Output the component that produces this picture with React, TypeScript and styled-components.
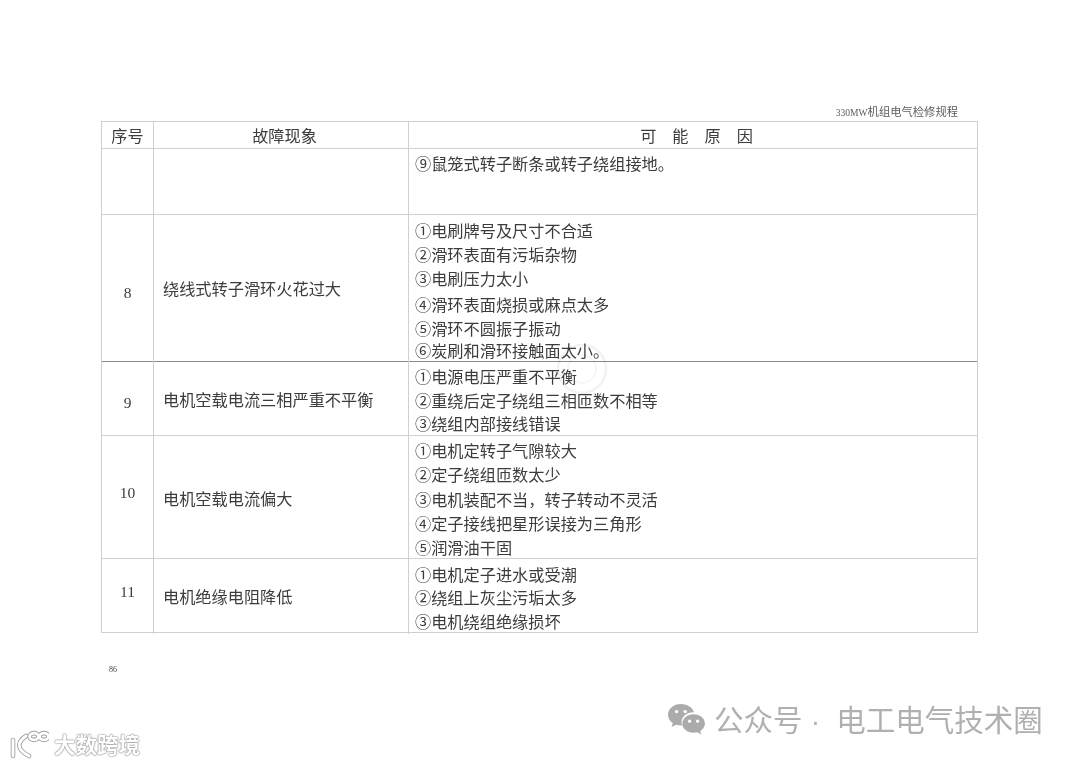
import React from 'react';
import styled, { createGlobalStyle } from 'styled-components';

const Global = createGlobalStyle`
  html, body { margin: 0; padding: 0; background: #fff; }
  body { width: 1080px; height: 764px; overflow: hidden; }
`;

const SERIF = `"Liberation Serif", "Noto Sans CJK SC", serif`;

const Page = styled.div`
  position: relative;
  width: 1080px;
  height: 764px;
  background: #fff;
  overflow: hidden;
  padding: 104px 0 0 101px;
  box-sizing: border-box;
  font-family: ${SERIF};
  color: #3c3c3c;
  filter: blur(0.35px);
`;

const RunningHead = styled.div`
  width: 857px;
  height: 17px;
  line-height: 17px;
  font-size: 11.3px;
  text-align: right;
  color: #5c5c5c;
`;

const Latin = styled.span`
  font-size: 9.6px;
`;

const Table = styled.div`
  width: 877px;
  border: 1px solid #cfcfcf;
  box-sizing: border-box;
`;

const Row = styled.div<{ $h: number; $line?: string }>`
  display: grid;
  grid-template-columns: 51px 255px 1fr;
  height: ${p => p.$h}px;
  box-sizing: border-box;
  border-bottom: 1px solid ${p => p.$line ?? '#d2d2d2'};
  &:last-child { border-bottom: none; }
`;

const Cell = styled.div`
  border-left: 1px solid #d0d0d0;
  display: flex;
  box-sizing: border-box;
  &:first-child { border-left: none; }
`;

const HeadCell = styled(Cell)<{ $spacing?: number; $shift?: number }>`
  align-items: center;
  justify-content: center;
  padding: 3px 0 0 ${p => p.$shift ?? 0}px;
  font-size: 16.2px;
  line-height: 24px;
  letter-spacing: ${p => p.$spacing ?? 0}px;
`;

const NumCell = styled(Cell)<{ $top: number }>`
  align-items: flex-start;
  justify-content: center;
  padding-top: ${p => p.$top}px;
  font-size: 15.5px;
  line-height: 20px;
`;

const FaultCell = styled(Cell)<{ $top: number }>`
  align-items: flex-start;
  padding: ${p => p.$top}px 0 0 9px;
  font-size: 16.2px;
  line-height: 22px;
`;

const CauseCell = styled(Cell)`
  flex-direction: column;
  padding-left: 6px;
  font-size: 16.2px;
`;

const Cause = styled.div<{ $top: number }>`
  height: 22px;
  line-height: 22px;
  margin-top: ${p => p.$top}px;
  white-space: nowrap;
`;

const PageNo = styled.div`
  margin: 32px 0 0 8px;
  font-size: 8px;
  line-height: 10px;
  color: #444;
`;

const Stamp = styled.svg`
  position: absolute;
  left: 553px;
  top: 340px;
  mix-blend-mode: multiply;
`;

const Brand = styled.div`
  position: absolute;
  left: 667px;
  top: 700px;
  display: flex;
  align-items: flex-start;
  gap: 8px;
  color: #b0b0b0;
  font-family: "Noto Sans CJK SC", sans-serif;
  font-size: 29.5px;
  line-height: 36px;
  white-space: nowrap;
`;

const BrandIcon = styled.svg`
  margin-top: 3px;
  flex: none;
`;

const BrandDot = styled.span`
  margin: 0 16px 0 8px;
  font-family: "Liberation Sans", sans-serif;
  color: #b8b8b8;
`;

const Watermark = styled.div`
  position: absolute;
  left: 9px;
  top: 729px;
  display: flex;
  align-items: center;
  gap: 5px;
  color: #fff;
  font-family: "Noto Sans CJK SC", sans-serif;
  font-size: 21.5px;
  font-weight: 700;
  line-height: 30px;
  text-shadow: 0 0 1.5px #8a8a8a, 0 0 1.5px #8a8a8a, 0 0 1px #a5a5a5;
  white-space: nowrap;
`;

const StampRing = () => (
  <Stamp width="58" height="58" viewBox="0 0 58 58" aria-hidden="true">
    <circle cx="29" cy="29" r="24" fill="none" stroke="#f2f2f2" strokeWidth="2.5" />
    <circle cx="29" cy="29" r="14" fill="none" stroke="#f6f6f6" strokeWidth="2" />
  </Stamp>
);

const WechatIcon = () => (
  <BrandIcon width="39" height="33" viewBox="0 0 39 33" aria-hidden="true">
    <path fill="#ababab" d="M14 1C6.5 1 1 5.9 1 11.8c0 3.4 1.9 6.3 4.8 8.3L4.6 24l4.5-2.3c1.5.4 3 .7 4.9.7h1c-.3-1-.5-2-.5-3.1 0-5.6 5.2-10 11.6-10h.9C25.8 4.6 20.4 1 14 1z" />
    <circle cx="9.6" cy="8.6" r="1.7" fill="#fff" />
    <circle cx="18.2" cy="8.6" r="1.7" fill="#fff" />
    <path fill="#ababab" d="M26.6 11.2c-6.3 0-11.3 4.1-11.3 9.3s5 9.3 11.3 9.3c1.4 0 2.6-.2 3.8-.5l3.8 2.1-1-3.3c2.9-1.8 4.7-4.5 4.7-7.6 0-5.2-4.9-9.3-11.3-9.3z" />
    <circle cx="22.6" cy="18.2" r="1.6" fill="#fff" />
    <circle cx="30.6" cy="18.2" r="1.6" fill="#fff" />
  </BrandIcon>
);

const logoShapes = (
  <>
    <path d="M4 10v16" />
    <path d="M17 6C8 12 7 19 20 26" />
    <ellipse cx="25" cy="6.5" rx="4.4" ry="3.4" />
    <ellipse cx="35" cy="6.5" rx="4.4" ry="3.4" />
  </>
);

const WatermarkLogo = () => (
  <svg width="40" height="29" viewBox="0 0 40 29" aria-hidden="true">
    <g fill="none" strokeLinecap="round">
      <g stroke="#a0a0a0" strokeWidth="4.6">{logoShapes}</g>
      <g stroke="#fff" strokeWidth="2.8">{logoShapes}</g>
    </g>
  </svg>
);

type Line = [string, number];
interface Item {
  h: number;
  line?: string;
  num: string;
  numTop: number;
  fault: string;
  faultTop: number;
  causes: Line[];
}

const items: Item[] = [
  { h: 66, num: '', numTop: 0, fault: '', faultTop: 0, causes: [['⑨鼠笼式转子断条或转子绕组接地。', 5]] },
  {
    h: 147, line: '#8a8a8a', num: '8', numTop: 68, fault: '绕线式转子滑环火花过大', faultTop: 64,
    causes: [['①电刷牌号及尺寸不合适', 6], ['②滑环表面有污垢杂物', 2], ['③电刷压力太小', 2], ['④滑环表面烧损或麻点太多', 4], ['⑤滑环不圆振子振动', 2], ['⑥炭刷和滑环接触面太小。', 0]],
  },
  {
    h: 74, num: '9', numTop: 31, fault: '电机空载电流三相严重不平衡', faultTop: 28,
    causes: [['①电源电压严重不平衡', 5], ['②重绕后定子绕组三相匝数不相等', 2], ['③绕组内部接线错误', 1]],
  },
  {
    h: 123, num: '10', numTop: 47, fault: '电机空载电流偏大', faultTop: 53,
    causes: [['①电机定转子气隙较大', 5], ['②定子绕组匝数太少', 2], ['③电机装配不当，转子转动不灵活', 3], ['④定子接线把星形误接为三角形', 2], ['⑤润滑油干固', 2]],
  },
  {
    h: 73, num: '11', numTop: 23, fault: '电机绝缘电阻降低', faultTop: 28,
    causes: [['①电机定子进水或受潮', 6], ['②绕组上灰尘污垢太多', 1], ['③电机绕组绝缘损坏', 2]],
  },
];

export default function App() {
  return (
    <Page>
      <Global />
      <RunningHead><Latin>330MW</Latin>机组电气检修规程</RunningHead>
      <Table>
        <Row $h={27}>
          <HeadCell>序号</HeadCell>
          <HeadCell $shift={7}>故障现象</HeadCell>
          <HeadCell $spacing={16} $shift={23}>可能原因</HeadCell>
        </Row>
        {items.map((it, i) => (
          <Row key={i} $h={it.h} $line={it.line}>
            <NumCell $top={it.numTop}>{it.num}</NumCell>
            <FaultCell $top={it.faultTop}>{it.fault}</FaultCell>
            <CauseCell>
              {it.causes.map(([t, top]) => (
                <Cause key={t} $top={top}>{t}</Cause>
              ))}
            </CauseCell>
          </Row>
        ))}
      </Table>
      <PageNo>86</PageNo>
      <StampRing />
      <Brand>
        <WechatIcon />
        <span>公众号<BrandDot>·</BrandDot>电工电气技术圈</span>
      </Brand>
      <Watermark>
        <WatermarkLogo />
        <span>大数跨境</span>
      </Watermark>
    </Page>
  );
}
